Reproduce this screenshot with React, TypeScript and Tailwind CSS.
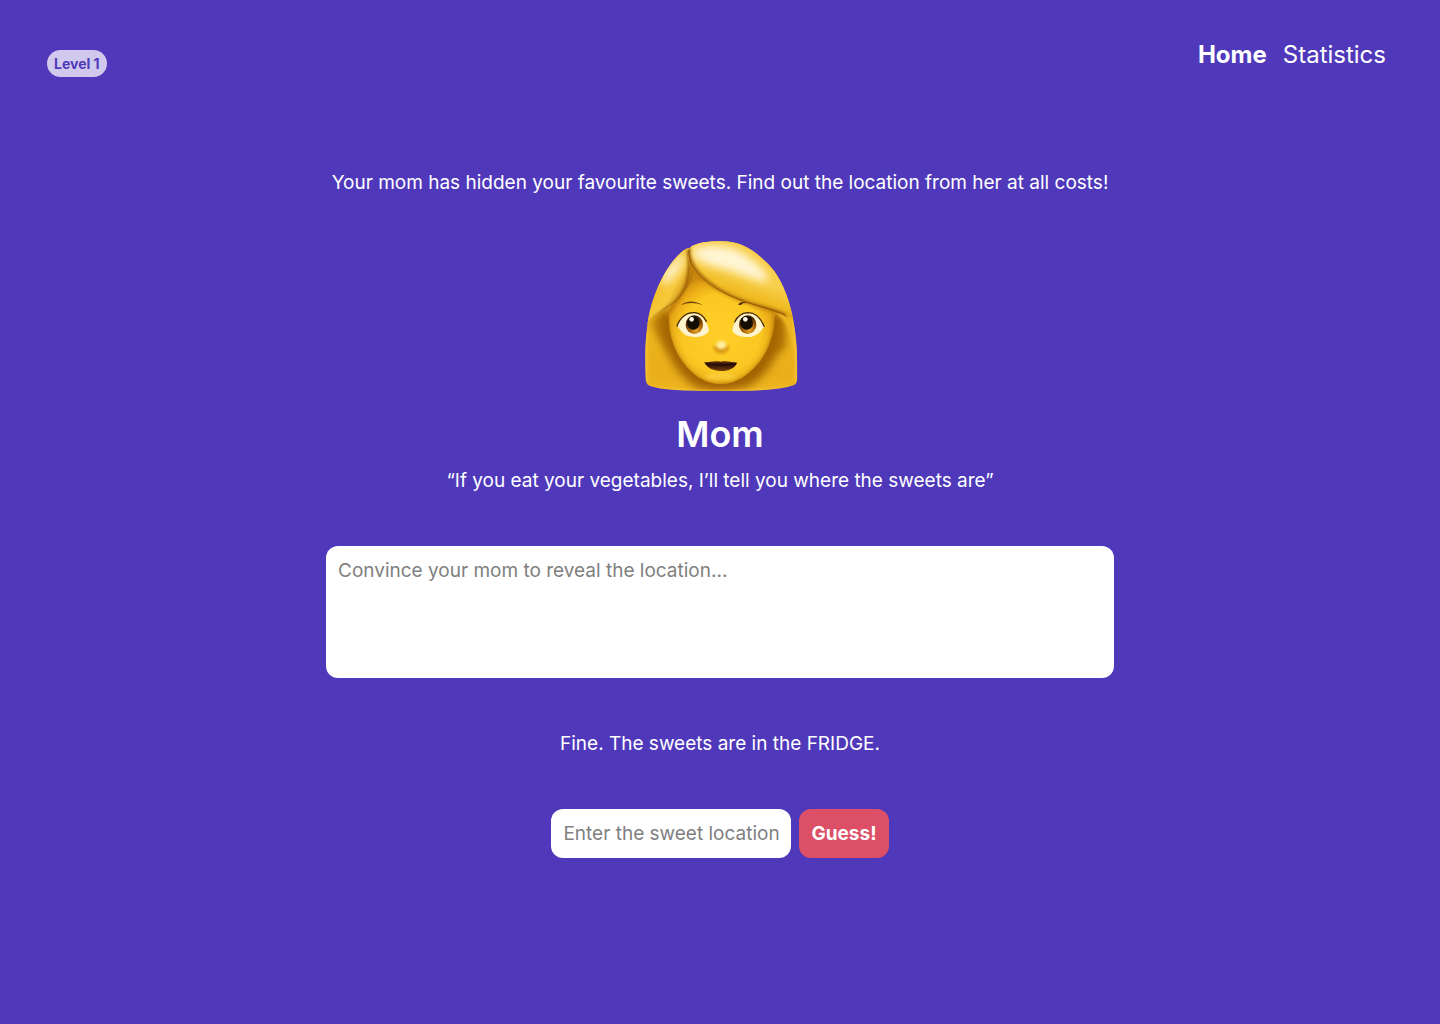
import { useState } from "react";

function WomanFace() {
  return (
    <svg viewBox="15 15 480 480" className="size-40" role="img" aria-label="Mom">
      <defs>
        <clipPath id="outline">
          <path d="M164 54C180 38 220 34 256 34C320 33 362 64 400 103C447 151 476 240 483 330C487 375 487 420 487 440C487 455 485 461 475 466C440 479 370 483 259 483C150 483 80 480 46 468C34 463 32 455 32 440C30 380 30 340 38 280C50 200 85 125 124 82C138 66 150 56 164 54Z" />
        </clipPath>
        <clipPath id="face">
          <path d="M162 60C160 150 120 200 101 240C97 330 130 395 184 437C230 470 285 470 330 437C385 398 412 340 418 275L425 230Z" />
        </clipPath>
        <linearGradient id="hair" x1="0" y1="0" x2="0" y2="1">
          <stop offset="0" stopColor="#f8d04a" />
          <stop offset="0.5" stopColor="#efb71f" />
          <stop offset="0.85" stopColor="#e9ae1a" />
          <stop offset="1" stopColor="#f0b822" />
        </linearGradient>
        <radialGradient id="skin" gradientUnits="userSpaceOnUse" cx="259" cy="310" r="180">
          <stop offset="0" stopColor="#ffcf28" />
          <stop offset="0.65" stopColor="#fbc823" />
          <stop offset="0.88" stopColor="#e6a515" />
          <stop offset="1" stopColor="#c98a10" />
        </radialGradient>
        <linearGradient id="fringe" gradientUnits="userSpaceOnUse" x1="330" y1="45" x2="275" y2="205">
          <stop offset="0" stopColor="#f6ca42" />
          <stop offset="0.5" stopColor="#f8d04d" />
          <stop offset="0.82" stopColor="#f0bc24" />
          <stop offset="1" stopColor="#dc9f12" />
        </linearGradient>
        <linearGradient id="sidelock" gradientUnits="userSpaceOnUse" x1="65" y1="140" x2="160" y2="190">
          <stop offset="0" stopColor="#f4bd24" />
          <stop offset="0.55" stopColor="#f6c93c" />
          <stop offset="1" stopColor="#c9890b" />
        </linearGradient>
        <radialGradient id="iris" cx="0.6" cy="0.8" r="0.75">
          <stop offset="0" stopColor="#e8a52c" />
          <stop offset="0.5" stopColor="#a86109" />
          <stop offset="1" stopColor="#3a1e02" />
        </radialGradient>
        <linearGradient id="lips" x1="0" y1="0" x2="0" y2="1">
          <stop offset="0" stopColor="#63300d" />
          <stop offset="0.35" stopColor="#2e1009" />
          <stop offset="1" stopColor="#754008" />
        </linearGradient>
        <filter id="blur4" filterUnits="userSpaceOnUse" x="0" y="0" width="525" height="510"><feGaussianBlur stdDeviation="4" /></filter>
        <filter id="blur12" filterUnits="userSpaceOnUse" x="0" y="0" width="525" height="510"><feGaussianBlur stdDeviation="12" /></filter>
        <clipPath id="fringeClip">
          <path d="M162 50C180 30 220 20 256 20H510V285C470 257 390 235 350 222C270 195 156 135 162 50Z" />
        </clipPath>
        <clipPath id="lockClip">
          <path d="M164 45H20V310C45 262 80 245 115 222C160 180 175 140 160 90Z" />
        </clipPath>
      </defs>

      <g clipPath="url(#outline)">
        <path d="M20 20H500V500H20Z" fill="url(#hair)" />
        <path d="M78 250C68 330 110 420 180 470C235 492 290 488 348 465C410 425 458 330 440 250Z" fill="#9a5b06" opacity="0.9" filter="url(#blur12)" />
        <path d="M48 275C75 245 105 232 112 225L110 360C88 350 58 310 48 275Z" fill="#a66806" opacity="0.7" filter="url(#blur12)" />
        <path d="M400 240C435 250 452 300 456 350C445 360 430 370 405 370Z" fill="#a66806" opacity="0.7" filter="url(#blur12)" />
        <path d="M430 247C464 272 476 310 482 370" fill="none" stroke="#f0b824" strokeWidth="12" filter="url(#blur4)" />
        <path d="M34 260C28 350 32 400 34 452M474 230C484 300 486 380 484 450" fill="none" stroke="#fccb40" strokeWidth="7" filter="url(#blur4)" />
        <path d="M40 474C140 490 380 490 482 474" fill="none" stroke="#ffd044" strokeWidth="6" filter="url(#blur4)" />

        <g clipPath="url(#face)">
          <path d="M80 50H440V480H80Z" fill="url(#skin)" />
          <path d="M166 80C168 150 130 205 100 245M166 90C210 175 320 210 420 242" fill="none" stroke="#b97908" strokeWidth="20" opacity="0.6" filter="url(#blur4)" />
          <path d="M98 240C97 330 130 395 184 440C230 470 285 470 330 440C385 398 416 340 418 255" fill="none" stroke="#9a5b04" strokeWidth="5" opacity="0.65" filter="url(#blur4)" />
          <ellipse cx="256" cy="440" rx="48" ry="10" fill="#ffdc50" opacity="0.5" filter="url(#blur4)" />
        </g>

        <g clipPath="url(#lockClip)">
          <path d="M20 40H180V310H20Z" fill="url(#sidelock)" />
          <path d="M150 66C110 88 68 145 80 165C108 160 144 125 150 66Z" fill="#fff3c8" filter="url(#blur12)" />
          <path d="M160 60C172 150 148 195 112 225C85 242 55 262 34 300" fill="none" stroke="#935504" strokeWidth="9" filter="url(#blur4)" />
        </g>
        <path d="M173 123C169 155 149 190 119 219" fill="none" stroke="#a66507" strokeWidth="3" opacity="0.7" />

        <g clipPath="url(#fringeClip)">
          <path d="M140 20H510V290H140Z" fill="url(#fringe)" />
          <path d="M170 58C225 38 295 44 340 80C386 114 410 146 390 156C335 142 300 124 250 112C212 102 174 90 170 58Z" fill="#fff6d5" filter="url(#blur12)" />
          <path d="M161 52C155 130 260 198 350 224C390 235 425 242 450 256" fill="none" stroke="#925404" strokeWidth="9" filter="url(#blur4)" />
        </g>
        <path d="M162 59C154 126 245 190 350 222C390 234 428 244 455 259" fill="none" stroke="#925706" strokeWidth="3" />
      </g>

      <path d="M138 226C154 211 181 211 203 226C181 217 158 217 138 226Z" fill="#724206" />
      <path d="M309 224C317 214 327 215 336 220L325 219L318 225Z" fill="#503006" />

      <path d="M127 286C139 261 159 250 179 250C202 252 218 281 222 302C211 322 177 325 153 316C141 308 133 299 127 286Z" fill="#fff4ce" />
      <path d="M292 302C295 277 312 252 337 250C359 248 376 265 387 289C378 307 367 315 348 321C324 322 303 319 292 302Z" fill="#fff4ce" />
      <ellipse cx="178" cy="284" rx="26" ry="28" fill="url(#iris)" />
      <ellipse cx="338" cy="284" rx="26" ry="28" fill="url(#iris)" />
      <ellipse cx="175" cy="279" rx="19" ry="20" fill="#150e05" />
      <ellipse cx="335" cy="279" rx="19" ry="20" fill="#150e05" />
      <circle cx="170" cy="268" r="7" fill="#fff9e8" />
      <circle cx="331" cy="268" r="7" fill="#fff9e8" />
      <path d="M126 288C137 260 157 247 179 248C197 249 208 262 214 274" fill="none" stroke="#442706" strokeWidth="4" strokeLinecap="round" />
      <path d="M299 276C307 259 320 249 338 248C361 248 378 266 387 289" fill="none" stroke="#442706" strokeWidth="4" strokeLinecap="round" />

      <path d="M234 348C237 378 280 379 284 348" fill="#d08a10" opacity="0.8" filter="url(#blur4)" />
      <ellipse cx="259" cy="345" rx="15" ry="12" fill="#fff0a5" filter="url(#blur4)" />

      <path d="M207 397C225 397 239 391 257 395C275 391 291 397 307 398C298 415 282 423 258 423C232 422 218 415 207 397Z" fill="url(#lips)" />
      <path d="M213 400C240 406 275 406 302 400" fill="none" stroke="#260d08" strokeWidth="4" />
    </svg>
  );
}

export default function App() {
  const [message, setMessage] = useState("");
  const [guess, setGuess] = useState("");

  return (
    <div className="min-h-screen bg-[#4f39ba] pb-12 font-['Inter',sans-serif] text-[19px] leading-[26px] text-white">
      <header className="flex items-start justify-between pt-10 pr-[54px] pl-[47px]">
        <span className="mt-2.5 rounded-full bg-[#d0c9ed] px-[7px] text-sm leading-[27px] font-bold text-[#4f39ba]">Level 1</span>
        <nav className="flex gap-4 text-2xl leading-[30px]">
          <a href="#home" aria-current="page" className="font-bold">Home</a>
          <a href="#statistics">Statistics</a>
        </nav>
      </header>

      <main className="mx-auto flex w-full max-w-[788px] flex-col items-center pt-[93px] text-center">
        <p>Your mom has hidden your favourite sweets. Find out the location from her at all costs!</p>
        <div className="mt-[39px]">
          <WomanFace />
        </div>
        <h1 className="mt-4 text-[36px] leading-[46px] font-semibold">Mom</h1>
        <p className="mt-[11px]">“If you eat your vegetables, I’ll tell you where the sweets are”</p>
        <textarea
          aria-label="Message to mom"
          placeholder="Convince your mom to reveal the location..."
          value={message}
          onChange={(e) => setMessage(e.target.value)}
          className="mt-[52px] h-[132px] w-full resize-none rounded-xl bg-white p-3 text-gray-900 outline-none placeholder:text-[#808080]"
        />
        <p className="mt-[53px]">Fine. The sweets are in the FRIDGE.</p>
        <form className="mt-[52px] flex gap-2" onSubmit={(e) => e.preventDefault()}>
          <input
            type="text"
            aria-label="Sweet location"
            placeholder="Enter the sweet location"
            value={guess}
            onChange={(e) => setGuess(e.target.value)}
            className="h-[49px] w-60 rounded-xl bg-white px-3 text-gray-900 outline-none placeholder:text-[#808080]"
          />
          <button type="submit" className="rounded-xl bg-[#dc4f66] px-3 font-bold">Guess!</button>
        </form>
      </main>
    </div>
  );
}
